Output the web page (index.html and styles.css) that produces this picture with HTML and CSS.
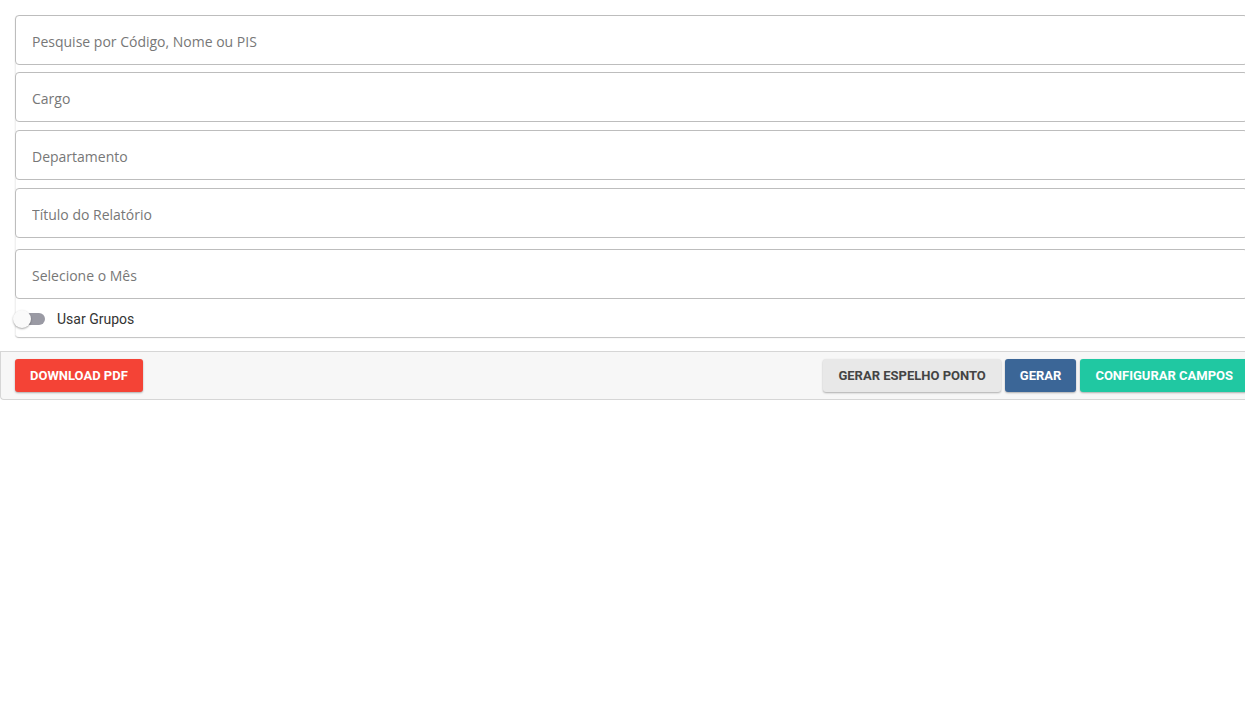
FILE: index.html
```html
<!DOCTYPE html>
<html lang="pt-BR">
<head>
<meta charset="utf-8">
<title>Relatório</title>
<link rel="stylesheet" href="styles.css">
</head>
<body>
<div class="panel">
  <div class="panel-body">
    <div class="filters">
      <div class="field field-first"><input class="input" type="text" placeholder="Pesquise por Código, Nome ou PIS"></div>
      <div class="field"><input class="input" type="text" placeholder="Cargo"></div>
      <div class="field"><input class="input" type="text" placeholder="Departamento"></div>
      <div class="field"><input class="input" type="text" placeholder="Título do Relatório"></div>
      <div class="field field-month"><input class="input" type="text" placeholder="Selecione o Mês"></div>
      <label class="toggle-row">
        <span class="toggle"><span class="track"></span><span class="thumb"></span></span>
        <span class="toggle-label">Usar Grupos</span>
      </label>
    </div>
  </div>
  <div class="panel-footer">
    <button class="btn btn-red">Download PDF</button>
    <div class="actions">
      <button class="btn btn-light">Gerar Espelho Ponto</button>
      <button class="btn btn-blue">Gerar</button>
      <button class="btn btn-teal">Configurar Campos</button>
    </div>
  </div>
</div>
</body>
</html>
```
FILE: styles.css
```css
html, body {
  margin: 0;
  padding: 0;
  background: #fff;
  overflow: hidden;
}
body {
  width: 1245px;
  height: 704px;
  font-family: Roboto, "Liberation Sans", sans-serif;
}
.panel {
  width: 1263px;
  margin-top: 15px;
}
.panel-body {
  padding: 0 15px 0 15px;
}
.filters {
  border-left: 1px solid #f0f0f0;
  border-radius: 4px;
  box-shadow: 0 1px 1px rgba(0,0,0,0.25);
  padding-bottom: 5px;
}
.field {
  margin-bottom: 8px;
  margin-left: -1px;
}
.field-first {
  margin-bottom: 7px;
}
.field-month {
  margin-top: 11px;
  margin-bottom: 0;
}
.input {
  display: block;
  box-sizing: border-box;
  width: 100%;
  height: 50px;
  margin: 0;
  padding: 2px 16px 0 16px;
  border: 1px solid #bdbdbd;
  border-radius: 4px;
  font-family: "Open Sans", sans-serif;
  font-size: 14px;
  color: #333;
  background: #fff;
  outline: none;
}
.input::placeholder {
  color: #777;
}
.toggle-row {
  display: flex;
  align-items: center;
  height: 26px;
  margin-top: 7px;
  margin-left: -3px;
}
.toggle {
  position: relative;
  width: 34px;
  height: 18px;
  margin-right: 10px;
}
.track {
  position: absolute;
  left: 11px;
  top: 3px;
  width: 21px;
  height: 12px;
  border-radius: 6px;
  background: #9a9aa4;
}
.thumb {
  position: absolute;
  left: 0;
  top: 0;
  width: 18px;
  height: 18px;
  border-radius: 50%;
  background: #fafafa;
  box-shadow: 0 1px 2px rgba(0,0,0,0.35);
}
.toggle-label {
  font-size: 14px;
  color: #333;
}
.panel-footer {
  margin-top: 14px;
  display: flex;
  justify-content: space-between;
  align-items: center;
  height: 47px;
  padding: 0 15px 0 14px;
  background: #f7f7f7;
  border-top: 1px solid #d6d6d6;
  border-bottom: 1px solid #d6d6d6;
  border-left: 1px solid #d6d6d6;
  border-radius: 0 0 0 4px;
}
.actions {
  display: flex;
  gap: 4px;
}
.btn {
  height: 33px;
  padding: 0 15px;
  border: none;
  border-radius: 3px;
  font-family: Roboto, "Liberation Sans", sans-serif;
  font-weight: 700;
  font-size: 13px;
  text-transform: uppercase;
  box-shadow: 0 1px 2px rgba(0,0,0,0.3);
  cursor: pointer;
}
.btn-red { background: #f44336; color: #fff; }
.btn-light { background: #e8e8e8; color: #444; }
.btn-blue { background: #3b6697; color: #fff; }
.btn-teal { background: #20c8a2; color: #fff; }
```
